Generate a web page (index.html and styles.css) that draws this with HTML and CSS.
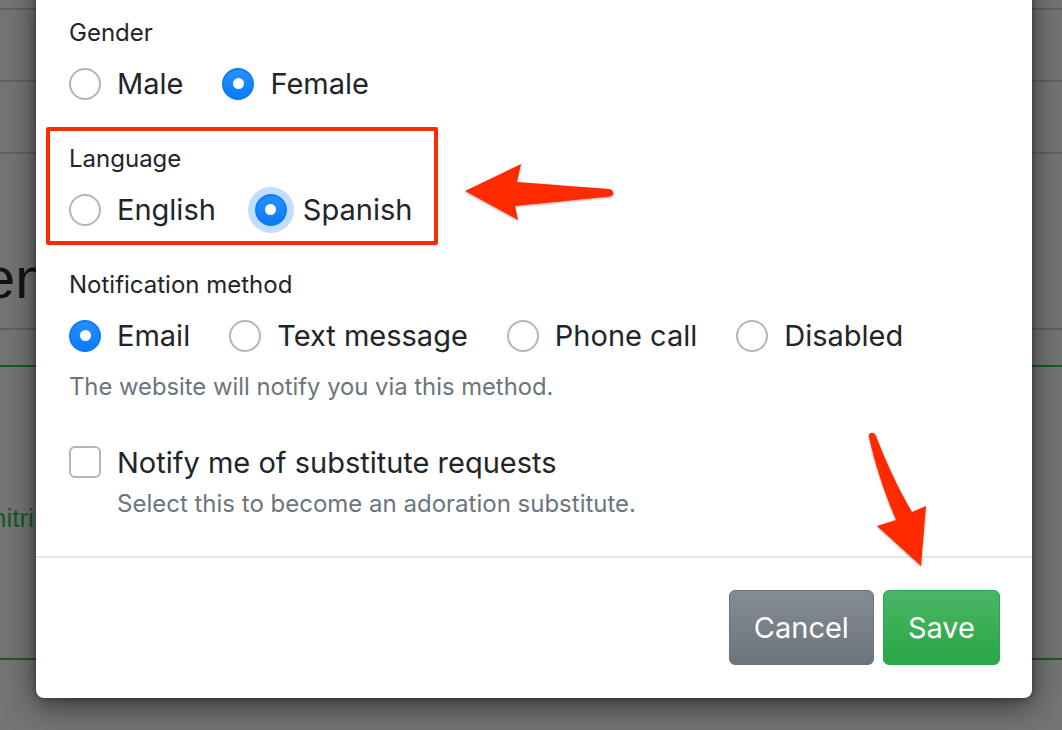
FILE: index.html
```html
<!DOCTYPE html>
<html>
<head>
<meta charset="utf-8">
<link rel="stylesheet" href="styles.css">
</head>
<body>
<div class="page">
  <div class="pg-line first"></div>
  <div class="pg-line"></div>
  <div class="pg-line"></div>
  <div class="pg-head"><span class="pg-title">Garden</span></div>
  <div class="pg-line grey"></div>
  <div class="pg-line green"></div>
  <div class="pg-link">Dmitri</div>
  <div class="pg-line green low"></div>
</div>

<div class="modal">
  <div class="modal-body">
    <div class="group">
      <div class="label">Gender</div>
      <div class="options">
        <div class="opt"><span class="radio"></span>Male</div>
        <div class="opt"><span class="radio on"></span>Female</div>
      </div>
    </div>
    <div class="group">
      <div class="label">Language</div>
      <div class="options">
        <div class="opt"><span class="radio"></span>English</div>
        <div class="opt"><span class="radio on focus"></span>Spanish</div>
      </div>
    </div>
    <div class="group">
      <div class="label">Notification method</div>
      <div class="options">
        <div class="opt"><span class="radio on"></span>Email</div>
        <div class="opt"><span class="radio"></span>Text message</div>
        <div class="opt"><span class="radio"></span>Phone call</div>
        <div class="opt"><span class="radio"></span>Disabled</div>
      </div>
      <div class="help">The website will notify you via this method.</div>
    </div>
    <div class="check-row">
      <span class="checkbox"></span>
      <div class="check-text">
        <div class="check-label">Notify me of substitute requests</div>
        <div class="help">Select this to become an adoration substitute.</div>
      </div>
    </div>
  </div>
  <div class="modal-footer">
    <button class="btn btn-cancel">Cancel</button>
    <button class="btn btn-save">Save</button>
  </div>
</div>

<div class="highlight"></div>

<svg class="arrows" width="1062" height="730" viewBox="0 0 1062 730">
  <defs>
    <filter id="sh" x="-20%" y="-20%" width="140%" height="140%">
      <feDropShadow dx="0" dy="1" stdDeviation="1.2" flood-color="#000" flood-opacity="0.35"/>
    </filter>
  </defs>
  <path filter="url(#sh)" fill="#ff2a00" d="M465,191 L521,164 L517,182 C555,185 585,187 609,189 C614,189.5 615,196 610,196.5 C585,199 555,202 515,206 L518,220 Z"/>
  <path filter="url(#sh)" fill="#ff2a00" d="M869,437 C868,432 874,431 876,436 C886,462 899,490 912,512 L926,506 L921,566 L877,526 L896,520 C885,494 875,465 869,437 Z"/>
</svg>
</body>
</html>
```
FILE: styles.css
```css
* { box-sizing: border-box; }
html, body {
  margin: 0;
  padding: 0;
  width: 1062px;
  height: 730px;
  overflow: hidden;
}
body {
  background: #737473;
  font-family: Inter, "Liberation Sans", Arial, sans-serif;
  color: #212529;
  position: relative;
}

/* dimmed page behind the modal */
.page {
  width: 1062px;
  padding-top: 8px;
}
.pg-line {
  height: 2px;
  background: #616261;
  margin-bottom: 70px;
}
.pg-head {
  height: 104px;
  padding-top: 25px;
  overflow: hidden;
  white-space: nowrap;
}
.pg-title {
  display: inline-block;
  margin-left: -146px;
  font-family: "Liberation Sans", Arial, sans-serif;
  font-size: 58px;
  line-height: 58px;
  color: #121314;
}
.pg-line.grey {
  margin-bottom: 35px;
  background: #5f605f;
}
.pg-line.green {
  background: #1a5a28;
  margin-bottom: 136px;
}
.pg-link {
  white-space: nowrap;
  font-family: "Liberation Sans", Arial, sans-serif;
  font-size: 26px;
  line-height: 30px;
  color: #145a24;
  margin-left: -34px;
  margin-bottom: 125px;
}
.pg-line.low { margin-bottom: 0; }

/* modal */
.modal {
  position: absolute;
  left: 36px;
  top: -20px;
  width: 996px;
  background: #fff;
  border-radius: 8px;
  box-shadow: 0 8px 30px rgba(0, 0, 0, 0.55), 0 0 6px rgba(0, 0, 0, 0.35);
}
.modal-body {
  padding: 35px 33px 34px 33px;
}
.group {
  margin-bottom: 35px;
}
.label {
  font-size: 24px;
  line-height: 36px;
  margin-bottom: 10px;
}
.options {
  display: flex;
  align-items: center;
  height: 45px;
}
.opt {
  display: flex;
  align-items: center;
  font-size: 29px;
  line-height: 45px;
  margin-right: 39px;
}
.radio {
  width: 32px;
  height: 32px;
  border-radius: 50%;
  border: 2px solid #b5b5b5;
  background: #fff;
  margin-right: 16px;
  position: relative;
  flex: none;
}
.radio.on {
  border-color: #0a7cfb;
  background: linear-gradient(180deg, #2a8ffd, #0a7bff);
}
.radio.on::after {
  content: "";
  position: absolute;
  left: 8.5px;
  top: 8.5px;
  width: 11px;
  height: 11px;
  border-radius: 50%;
  background: #fff;
}
.radio.focus {
  box-shadow: 0 0 0 7px #c2ddfd;
}
.help {
  font-size: 23.8px;
  line-height: 36px;
  color: #6c757d;
  margin-top: 11px;
}
.check-row {
  display: flex;
  align-items: flex-start;
}
.checkbox {
  width: 32px;
  height: 32px;
  border: 2px solid #b5b5b5;
  border-radius: 6px;
  margin-top: 6px;
  margin-right: 16px;
  flex: none;
}
.check-label {
  font-size: 29px;
  line-height: 45px;
}
.check-text .help {
  margin-top: 1px;
  font-size: 24px;
}

.modal-footer {
  border-top: 2px solid #e3e6e9;
  padding: 32px 32px 33px 32px;
  display: flex;
  justify-content: flex-end;
  gap: 9px;
}
.btn {
  font-family: Inter, "Liberation Sans", Arial, sans-serif;
  font-size: 29px;
  line-height: 45px;
  padding: 14px 24px;
  border-radius: 6px;
  color: #fff;
  border: 1px solid;
}
.btn-cancel {
  background: linear-gradient(180deg, #848b93, #6c757d);
  border-color: #6c757d;
}
.btn-save {
  background: linear-gradient(180deg, #4bb565, #29a745);
  border-color: #29a745;
}

/* annotation overlays */
.highlight {
  position: absolute;
  left: 46px;
  top: 127px;
  width: 392px;
  height: 118px;
  border: 4px solid #ff2a00;
  border-radius: 2px;
}
.arrows {
  position: absolute;
  left: 0;
  top: 0;
  pointer-events: none;
}
```
